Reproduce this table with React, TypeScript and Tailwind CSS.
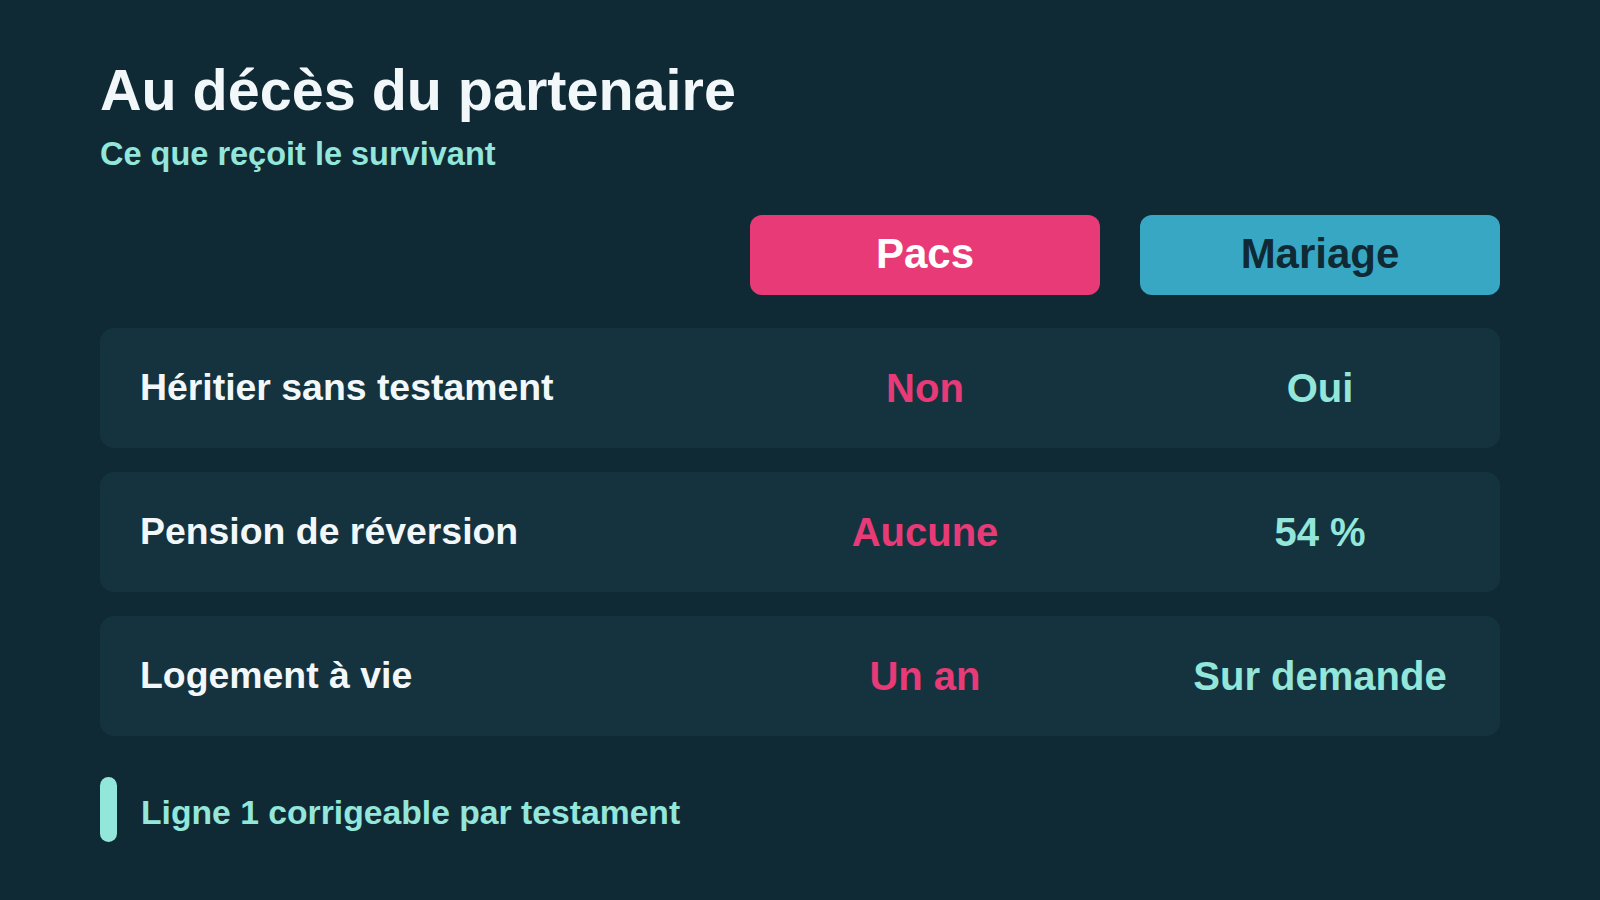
const rows = [
  { label: 'Héritier sans testament', pacs: 'Non', mariage: 'Oui' },
  { label: 'Pension de réversion', pacs: 'Aucune', mariage: '54 %' },
  { label: 'Logement à vie', pacs: 'Un an', mariage: 'Sur demande' },
];

export default function App() {
  return (
    <div
      className="w-[1600px] h-[900px] bg-[#102a35] px-[100px] pt-[62px] overflow-hidden"
      style={{ fontFamily: '"Liberation Sans", Arial, sans-serif' }}
    >
      <h1 className="text-[57.5px] leading-none font-bold text-[#f2f8fa]">Au décès du partenaire</h1>
      <p className="mt-[18px] text-[32.5px] leading-none font-bold text-[#93e6da]">Ce que reçoit le survivant</p>

      {/* en-têtes */}
      <div className="mt-[45px] grid grid-cols-[1fr_350px_360px] gap-x-10 pl-10">
        <div />
        <div className="h-20 pb-1 rounded-xl bg-[#e83a77] flex items-center justify-center text-[42px] font-bold text-white">
          Pacs
        </div>
        <div className="h-20 pb-1 rounded-xl bg-[#38a7c4] flex items-center justify-center text-[42px] font-bold text-[#0f2a35]">
          Mariage
        </div>
      </div>

      <div className="mt-[33px] flex flex-col gap-6">
        {rows.map((r) => (
          <div
            key={r.label}
            className="h-[120px] rounded-[14px] bg-[#15333f] grid grid-cols-[1fr_350px_360px] gap-x-10 pl-10 items-center"
          >
            <div className="text-[37.4px] leading-none font-bold text-[#f2f8fa]">{r.label}</div>
            <div className="text-center text-[40px] leading-none font-bold text-[#e83a77]">{r.pacs}</div>
            <div className="text-center text-[40px] leading-none font-bold text-[#93e6da]">{r.mariage}</div>
          </div>
        ))}
      </div>

      <div className="mt-[41px] flex items-center gap-6">
        <div className="w-[17px] h-[65px] rounded-full bg-[#93e6da]" />
        <p className="pt-[6px] text-[33.7px] leading-none font-bold text-[#93e6da]">Ligne 1 corrigeable par testament</p>
      </div>
    </div>
  );
}
